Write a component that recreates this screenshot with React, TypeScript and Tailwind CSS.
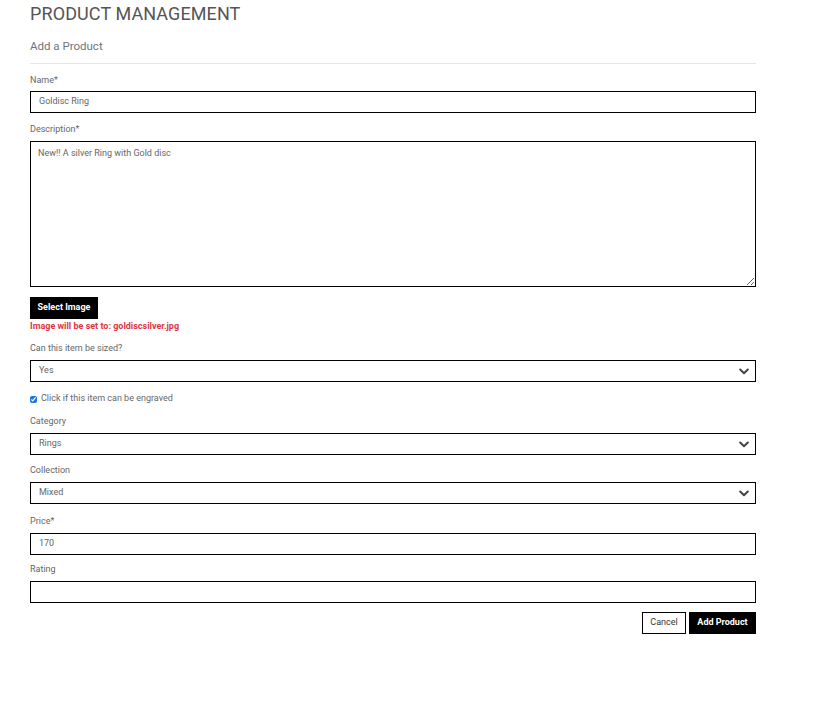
import React from "react";

const font = { fontFamily: "Roboto, 'Liberation Sans', sans-serif" };

function Label({ children }: { children: React.ReactNode }) {
  return <div className="h-[17px] text-[9px] leading-[9px] pt-[1px] text-[#666]">{children}</div>;
}

function TextInput({ value }: { value: string }) {
  return (
    <div className="h-[22px] border border-black flex items-center pl-[8px] text-[9px] text-[#666]">
      {value}
    </div>
  );
}

function Select({ value }: { value: string }) {
  return (
    <div className="h-[22px] border border-black flex items-center justify-between pl-[8px] pr-[6px] text-[9px] text-[#666]">
      <span>{value}</span>
      <svg width="10" height="7" viewBox="0 0 10 7">
        <path d="M1.2 1.5 L5 5.2 L8.8 1.5" fill="none" stroke="#444" strokeWidth="2" strokeLinecap="round" strokeLinejoin="round" />
      </svg>
    </div>
  );
}

export default function App() {
  return (
    <div className="w-[827px] h-[725px] bg-white" style={font}>
      <div className="ml-[30px] w-[726px] pt-[4px]">
        <h1 className="text-[18px] leading-[20px] text-[#555] tracking-[0.1px]">PRODUCT MANAGEMENT</h1>
        <h2 className="mt-[15px] text-[11.5px] leading-[14px] text-[#6c757d]">Add a Product</h2>
        <div className="mt-[10px] border-t border-[#e5e5e5]" />
        <div className="mt-[11px]">
          <Label>Name*</Label>
          <div className="mt-[-1px]">
            <TextInput value="Goldisc Ring" />
          </div>
        </div>
        <div className="mt-[11px]">
          <Label>Description*</Label>
          <textarea
            defaultValue="New!! A silver Ring with Gold disc"
            className="block w-full h-[146px] border border-black px-[7px] py-[6px] text-[9px] leading-[11px] text-[#666] outline-none"
          />
        </div>
        <button className="mt-[10px] h-[22px] w-[68px] bg-black text-white text-[9px] font-bold flex items-center justify-center">
          Select Image
        </button>
        <div className="mt-[2px] text-[9px] leading-[11px] font-bold text-[#dc3545]">
          Image will be set to: goldiscsilver.jpg
        </div>
        <div className="mt-[11px]">
          <Label>Can this item be sized?</Label>
          <Select value="Yes" />
        </div>
        <div className="mt-[11px] flex items-center h-[12px] text-[9px] text-[#666]">
          <input type="checkbox" defaultChecked className="w-[7px] h-[7px] m-0 mr-[4px] accent-[#1a73e8]" />
          <span>Click if this item can be engraved</span>
        </div>
        <div className="mt-[11px]">
          <Label>Category</Label>
          <Select value="Rings" />
        </div>
        <div className="mt-[10px]">
          <Label>Collection</Label>
          <Select value="Mixed" />
        </div>
        <div className="mt-[12px]">
          <Label>Price*</Label>
          <TextInput value="170" />
        </div>
        <div className="mt-[9px]">
          <Label>Rating</Label>
          <TextInput value="" />
        </div>
        <div className="mt-[9px] flex justify-end gap-[3px]">
          <button className="h-[22px] w-[44px] border border-black bg-white text-[9px] text-[#333] flex items-center justify-center">
            Cancel
          </button>
          <button className="h-[22px] w-[67px] bg-black text-white text-[9px] font-bold flex items-center justify-center">
            Add Product
          </button>
        </div>
      </div>
    </div>
  );
}
